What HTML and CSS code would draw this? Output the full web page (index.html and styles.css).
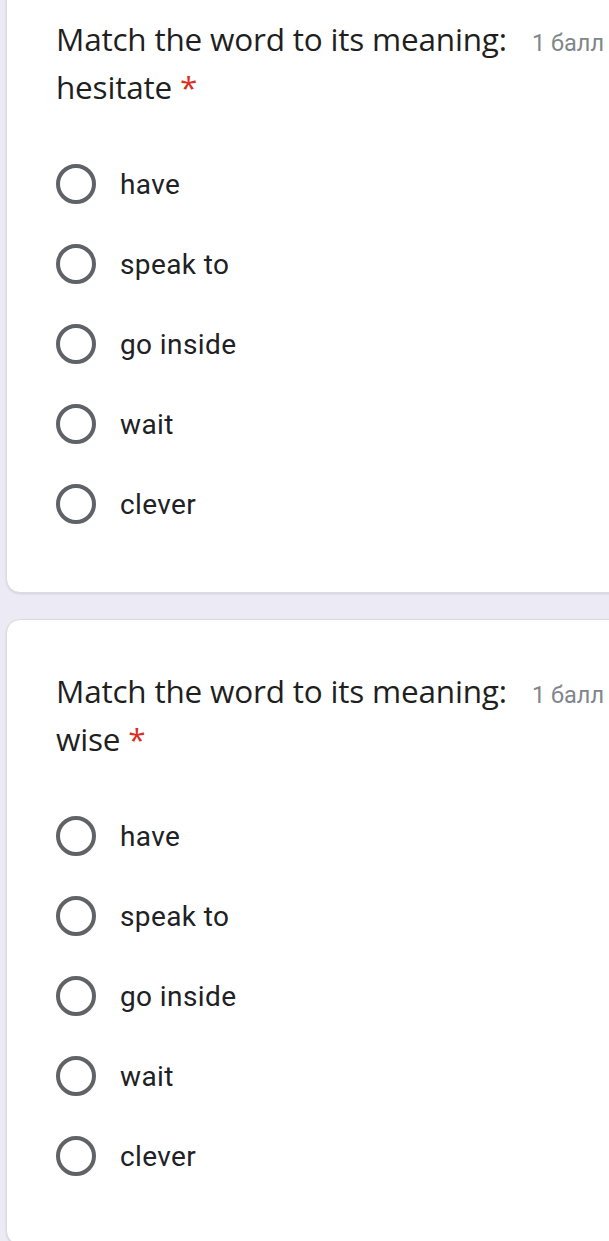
FILE: index.html
```html
<!DOCTYPE html>
<html lang="ru">
<head>
    <meta charset="UTF-8">
    <meta name="viewport" content="width=device-width, initial-scale=1.0">
    <title>Match the word</title>
    <link rel="stylesheet" href="styles.css">
</head>
<body>
    <div class="form">
        <div class="card first">
            <div class="question">
                <div class="title">Match the word to its meaning: hesitate <span class="req">*</span></div>
                <div class="points">1 балл</div>
            </div>
            <div class="options">
                <label class="option"><span class="radio"></span>have</label>
                <label class="option"><span class="radio"></span>speak to</label>
                <label class="option"><span class="radio"></span>go inside</label>
                <label class="option"><span class="radio"></span>wait</label>
                <label class="option"><span class="radio"></span>clever</label>
            </div>
        </div>

        <div class="card">
            <div class="question">
                <div class="title">Match the word to its meaning: wise <span class="req">*</span></div>
                <div class="points">1 балл</div>
            </div>
            <div class="options">
                <label class="option"><span class="radio"></span>have</label>
                <label class="option"><span class="radio"></span>speak to</label>
                <label class="option"><span class="radio"></span>go inside</label>
                <label class="option"><span class="radio"></span>wait</label>
                <label class="option"><span class="radio"></span>clever</label>
            </div>
        </div>
    </div>
</body>
</html>
```

FILE: styles.css
```css
html, body {
    margin: 0;
    padding: 0;
    background-color: #ecebf5;
    overflow: hidden;
}
body {
    font-family: Roboto, 'Liberation Sans', sans-serif;
    color: #202124;
}
.form {
    width: 660px;
    padding-left: 6px;
}
.card {
    background-color: #fff;
    border: 1px solid #dcdbe3;
    border-radius: 14px;
    box-shadow: 0 1px 2px rgba(60, 64, 67, 0.15);
    padding: 47px 0 48px 49px;
    margin-bottom: 26px;
}
.card.first {
    margin-top: -33px;
}
.question {
    display: flex;
    align-items: flex-start;
    width: 548px;
    justify-content: space-between;
}
.title {
    font-family: 'Open Sans', Roboto, sans-serif;
    font-size: 31.5px;
    line-height: 48px;
    width: 462px;
    letter-spacing: -0.2px;
    color: #1f1f1f;
}
.req {
    color: #d93025;
}
.points {
    font-size: 23.5px;
    line-height: 48px;
    padding-top: 4px;
    color: #80868b;
    white-space: nowrap;
}
.options {
    margin-top: 33px;
}
.option {
    display: flex;
    align-items: center;
    height: 80px;
    font-size: 28px;
    letter-spacing: 0.4px;
}
.radio {
    width: 32px;
    height: 32px;
    border: 4px solid #5f6368;
    border-radius: 50%;
    margin-right: 24px;
    flex-shrink: 0;
}
```
